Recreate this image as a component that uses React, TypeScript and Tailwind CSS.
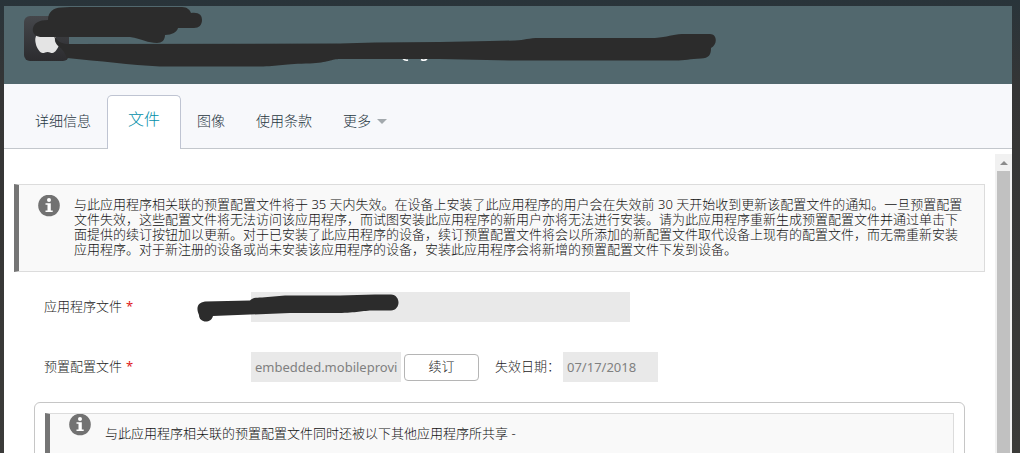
import React from 'react';
import { FaApple } from 'react-icons/fa';

interface TabItem {
  id: string;
  label: string;
  hasMenu?: boolean;
}

const tabs: TabItem[] = [
  { id: 'details', label: '详细信息' },
  { id: 'files', label: '文件' },
  { id: 'images', label: '图像' },
  { id: 'terms', label: '使用条款' },
  { id: 'more', label: '更多', hasMenu: true },
];

const InfoIcon: React.FC = () => (
  <svg viewBox="0 0 22 22" className="h-[22px] w-[22px] shrink-0" aria-hidden="true">
    <circle cx="11" cy="10.500" r="10.800" fill="#727272" />
    <circle cx="11" cy="5" r="2" fill="#fff" />
    <path d="M7.500 8.300h5.300v7.200h1.900v1.500H7.500v-1.500h2V9.800h-2z" fill="#fff" />
  </svg>
);

interface NoticeProps {
  children: React.ReactNode;
  raised?: boolean;
}

const Notice: React.FC<NoticeProps> = ({ children, raised = false }) => (
  <div
    className={`flex border border-l-[5px] border-[#dcdcdc] border-l-[#757575] bg-[#f9f9f9] pl-[19px] pr-5 ${
      raised ? '' : 'pt-2.5'
    }`}
  >
    <InfoIcon />
    <p className={`ml-3.5 pb-3.5 text-[13px] leading-[15px] text-[#111] ${raised ? 'pt-3' : 'pt-0.5'}`}>
      {children}
    </p>
  </div>
);

const fieldClass = 'h-[30px] bg-[#e9e9e9] px-1 text-[13px] font-normal text-[#808080] outline-none';

const Header: React.FC = () => (
  <header className="relative h-[78px] shrink-0 bg-[#52686e] px-5 py-2.5">
    <div className="flex h-[45px] w-[45px] items-center justify-center rounded-md bg-gradient-to-b from-[#45474b] to-[#2c2c2f]">
      <FaApple className="h-8 w-8 text-[#e4e4e4]" />
    </div>
    <svg
      viewBox="4 6 720 78"
      className="absolute left-0 top-0 h-[78px] w-[720px]"
      aria-hidden="true"
    >
      <path
        d="M403 58.500q2 2.500 5 1.500M421 59.500q4 2 6-1"
        fill="none"
        stroke="#fff"
        strokeWidth="1.600"
      />
      <path
        d="M48 20C48 12 53 8 61 7.500L70 7H182C187 7 190 10 191 13C199 12 202 15 202 20C202 25 199 28 194 28H178C177 32 172 35 165 35C165 40 162 43 157 43C148 43 142 39 130 37H40C35 36 32 33 33 28C34 23 39 20 48 20Z"
        fill="#2c2c2c"
      />
      <path
        d="M54 36C58 42 62 44 68 44L340 43.500L375 42.500L440 42L490 41L515 40.500C525 40 528 38 540 38H655C668 37 672 34.500 682 34H710C717 34 718 44 711 48C711 55 709 58 701 58.500C690 59 685 60.500 675 60.500H510L440 59H340C332 59 328 62.500 310 63.500C285 63.500 278 66.500 260 66.500H160C130 65 100 61 67 58C64 50 61 48 57 45Z"
        fill="#2c2c2c"
      />
    </svg>
  </header>
);

const TabBar: React.FC = () => (
  <nav className="flex h-[65px] shrink-0 items-end gap-px border-b border-[#c3c7cc] bg-[#f7f8fb] pl-4">
    {tabs.map((tab) =>
      tab.id === 'files' ? (
        <button
          key={tab.id}
          type="button"
          className="-mb-px h-[54px] rounded-t-[5px] border border-b-0 border-[#bfc4d2] bg-white px-5 pb-2 text-base text-[#008ea8]"
        >
          {tab.label}
        </button>
      ) : (
        <button
          key={tab.id}
          type="button"
          className="flex h-[54px] items-center gap-1.5 px-[15px] text-sm text-[#1f363f]"
        >
          {tab.label}
          {tab.hasMenu && (
            <svg viewBox="0 0 10 5" className="h-[5px] w-2.5" aria-hidden="true">
              <path d="M0 0h10L5 5z" fill="#a3a9ad" />
            </svg>
          )}
        </button>
      )
    )}
  </nav>
);

const ScrollTrack: React.FC = () => (
  <div className="mt-[5px] flex w-[17px] shrink-0 flex-col items-center bg-[#f1f1f1]">
    <div className="flex h-[17px] items-center">
      <svg viewBox="0 0 8 4" className="h-1 w-2" aria-hidden="true">
        <path d="M0 4h8L4 0z" fill="#8b8b8b" />
      </svg>
    </div>
    <div className="w-[13px] flex-1 bg-[#c1c1c1]" />
  </div>
);

const Required: React.FC = () => <span className="ml-1 font-normal text-[#e02020]">*</span>;

export default function App() {
  return (
    <div
      lang="zh-CN"
      className="flex h-screen flex-col overflow-hidden bg-gradient-to-b from-[#29343a] via-[#353535] via-20% to-[#3b3b39] pl-1 pr-2 pt-1.5 font-['Noto_Sans','Noto_Sans_CJK_SC',sans-serif] font-light"
    >
      <div className="flex min-h-0 flex-1 flex-col bg-white">
        <Header />
        <TabBar />
        <div className="flex min-h-0 flex-1">
          <main className="min-w-0 flex-1 overflow-hidden px-2.5 pt-[35px]">
            <Notice>
              与此应用程序相关联的预置配置文件将于 35 天内失效。在设备上安装了此应用程序的用户会在失效前 30
              天开始收到更新该配置文件的通知。一旦预置配置文件失效，这些配置文件将无法访问该应用程序，而试图安装此应用程序的新用户亦将无法进行安装。请为此应用程序重新生成预置配置文件并通过单击下面提供的续订按钮加以更新。对于已安装了此应用程序的设备，续订预置配置文件将会以所添加的新配置文件取代设备上现有的配置文件，而无需重新安装应用程序。对于新注册的设备或尚未安装该应用程序的设备，安装此应用程序会将新增的预置配置文件下发到设备。
            </Notice>

            <form className="mt-5 flex flex-col gap-[30px] pl-[30px] text-[13px] text-[#1c1c1c]">
              <div className="relative flex items-center">
                <label htmlFor="app-file" className="w-[207px]">
                  应用程序文件
                  <Required />
                </label>
                <input id="app-file" type="text" readOnly className={`${fieldClass} w-[379px]`} />
                <svg
                  viewBox="194 292 208 30"
                  className="absolute left-[150px] top-0 h-[30px] w-[208px]"
                  aria-hidden="true"
                >
                  <path
                    d="M205 301.500L250 300.500C252 298 256 297.500 262 297.500L285 295.500H340L375 294.500H391C401 295 401 310 391 310.500H372C360 311 355 313 335 313H290L213 316C211 324 199 323 199 315C196 308 197 303 205 301.500Z"
                    fill="#2c2c2c"
                  />
                </svg>
              </div>

              <div className="flex items-center">
                <label htmlFor="profile-file" className="w-[207px]">
                  预置配置文件
                  <Required />
                </label>
                <input
                  id="profile-file"
                  type="text"
                  readOnly
                  defaultValue="embedded.mobileprovision"
                  className={`${fieldClass} w-[150px]`}
                />
                <button
                  type="button"
                  className="ml-[3px] h-[27px] w-[75px] rounded border border-[#b5b5b5] bg-white"
                >
                  续订
                </button>
                <label htmlFor="expiry" className="ml-4 w-[68px] whitespace-nowrap">
                  失效日期：
                </label>
                <input
                  id="expiry"
                  type="text"
                  readOnly
                  defaultValue="07/17/2018"
                  className={`${fieldClass} w-[95px]`}
                />
              </div>
            </form>

            <section className="mx-5 mt-5 h-40 rounded-md border border-[#c6c6c6] p-2.5">
              <Notice raised>
                与此应用程序相关联的预置配置文件同时还被以下其他应用程序所共享 -
              </Notice>
            </section>
          </main>
          <ScrollTrack />
        </div>
      </div>
    </div>
  );
}
